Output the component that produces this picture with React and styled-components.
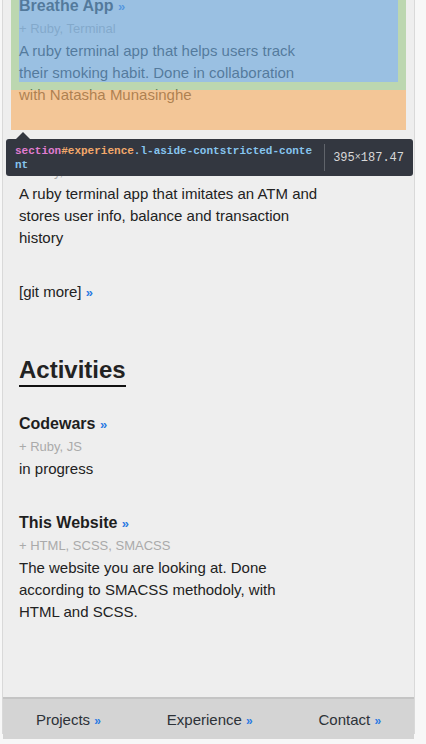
import React from 'react';
import styled, { createGlobalStyle } from 'styled-components';

const GlobalStyle = createGlobalStyle`
  html, body {
    margin: 0;
    padding: 0;
    background: #f7f7f7;
  }
  body {
    font-family: "Liberation Sans", Helvetica, Arial, sans-serif;
    color: #222;
    overflow: hidden;
  }
`;

const projects = [
  {
    title: 'Breathe App',
    tags: 'Ruby, Terminal',
    text: 'A ruby terminal app that helps users track their smoking habit. Done in collaboration with Natasha Munasinghe',
  },
  {
    title: 'ATM App',
    tags: 'Ruby, Terminal',
    text: 'A ruby terminal app that imitates an ATM and stores user info, balance and transaction history',
  },
];

const activities = [
  { title: 'Codewars', tags: 'Ruby, JS', text: 'in progress' },
  {
    title: 'This Website',
    tags: 'HTML, SCSS, SMACSS',
    text: 'The website you are looking at. Done according to SMACSS methodoly, with HTML and SCSS.',
  },
];

function Item({ title, tags, text, first }) {
  return (
    <Entry first={first}>
      <EntryTitle>
        {title} <Chevron>»</Chevron>
      </EntryTitle>
      <Tags>+ {tags}</Tags>
      <Text>{text}</Text>
    </Entry>
  );
}

export default function App() {
  return (
    <Page>
      <GlobalStyle />
      <Panel>
        <Section>
          {projects.map((p, i) => (
            <Item key={p.title} {...p} first={i === 0} />
          ))}
          <Text>
            [git more] <Chevron>»</Chevron>
          </Text>
        </Section>
        <Section spaced>
          <Heading>Activities</Heading>
          {activities.map((a) => (
            <Item key={a.title} {...a} />
          ))}
        </Section>
      </Panel>

      <MarginBox />
      <PaddingBox>
        <ContentBox />
      </PaddingBox>

      <Tooltip>
        <Selector>
          <TagName>section</TagName>
          <IdName>#experience</IdName>
          <ClassName>.l-aside-contstricted-content</ClassName>
        </Selector>
        <Dims>
          395<Times>×</Times>187.47
        </Dims>
      </Tooltip>

      <BottomNav>
        <NavLink>
          Projects <Chevron nav>»</Chevron>
        </NavLink>
        <NavLink>
          Experience <Chevron nav>»</Chevron>
        </NavLink>
        <NavLink>
          Contact <Chevron nav>»</Chevron>
        </NavLink>
      </BottomNav>
    </Page>
  );
}

const Page = styled.div`
  position: relative;
  width: 426px;
  height: 744px;
  overflow: hidden;
`;

const Panel = styled.div`
  box-sizing: border-box;
  margin-left: 2px;
  width: 413px;
  height: 739px;
  padding: 0 16px;
  background: #eeeeee;
  border-left: 1px solid #d9d9d9;
  border-right: 1px solid #d9d9d9;
  border-bottom: 1px solid #d9d9d9;
`;

const Section = styled.section`
  margin-top: ${({ spaced }) => (spaced ? '51px' : '0')};
`;

const Entry = styled.div`
  margin-top: ${({ first }) => (first ? '-5px' : '0')};
  margin-bottom: 32px;
`;

const EntryTitle = styled.h3`
  margin: 0;
  font-size: 16px;
  line-height: 22px;
  font-weight: bold;
  color: #1e1e1e;
`;

const Chevron = styled.span`
  color: #2a7ae2;
  font-weight: bold;
  font-size: ${({ nav }) => (nav ? '12px' : '13px')};
`;

const Tags = styled.div`
  font-size: 13px;
  line-height: 22px;
  color: #aaaaaa;
`;

const Text = styled.p`
  margin: 0;
  max-width: 300px;
  font-size: 15px;
  line-height: 22px;
  color: #222;
`;

const Heading = styled.h2`
  display: inline-block;
  margin: 0 0 26px;
  font-size: 24px;
  line-height: 30px;
  font-weight: bold;
  color: #222;
  border-bottom: 2px solid #111;
`;

const MarginBox = styled.div`
  position: absolute;
  left: 11px;
  top: 90px;
  width: 395px;
  height: 40px;
  background: rgba(246, 178, 107, 0.66);
`;

const PaddingBox = styled.div`
  position: absolute;
  box-sizing: border-box;
  left: 11px;
  top: -8px;
  width: 395px;
  height: 98px;
  border: 8px solid rgba(147, 196, 125, 0.55);
`;

const ContentBox = styled.div`
  width: 100%;
  height: 100%;
  background: rgba(111, 168, 220, 0.66);
`;

const Tooltip = styled.div`
  position: absolute;
  left: 6px;
  top: 139px;
  box-sizing: border-box;
  width: 407px;
  height: 37px;
  padding: 0 9px;
  display: flex;
  align-items: center;
  background: #333740;
  border-radius: 3px;
  font-family: "Liberation Mono", "DejaVu Sans Mono", monospace;
  font-size: 11px;
  line-height: 14px;
  font-weight: bold;

  &::before {
    content: '';
    position: absolute;
    left: 10px;
    top: -7px;
    border-left: 7px solid transparent;
    border-right: 7px solid transparent;
    border-bottom: 7px solid #333740;
  }
`;

const Selector = styled.div`
  width: 300px;
  word-break: break-all;
`;

const TagName = styled.span`
  color: #e07cd0;
`;

const IdName = styled.span`
  color: #f2a86a;
`;

const ClassName = styled.span`
  color: #86c4ee;
`;

const Dims = styled.div`
  margin-left: 10px;
  padding-left: 8px;
  border-left: 1px solid #60646b;
  height: 27px;
  display: flex;
  align-items: center;
  font-size: 12px;
  font-weight: normal;
  color: #d8d8d8;
`;

const Times = styled.span`
  font-size: 10px;
`;

const BottomNav = styled.nav`
  position: absolute;
  left: 3px;
  bottom: 5px;
  width: 411px;
  height: 42px;
  box-sizing: border-box;
  display: flex;
  justify-content: space-around;
  align-items: center;
  background: #d4d4d4;
  border-top: 2px solid #c4c4c4;
`;

const NavLink = styled.a`
  font-size: 15px;
  color: #2d3238;
  text-decoration: none;
`;
